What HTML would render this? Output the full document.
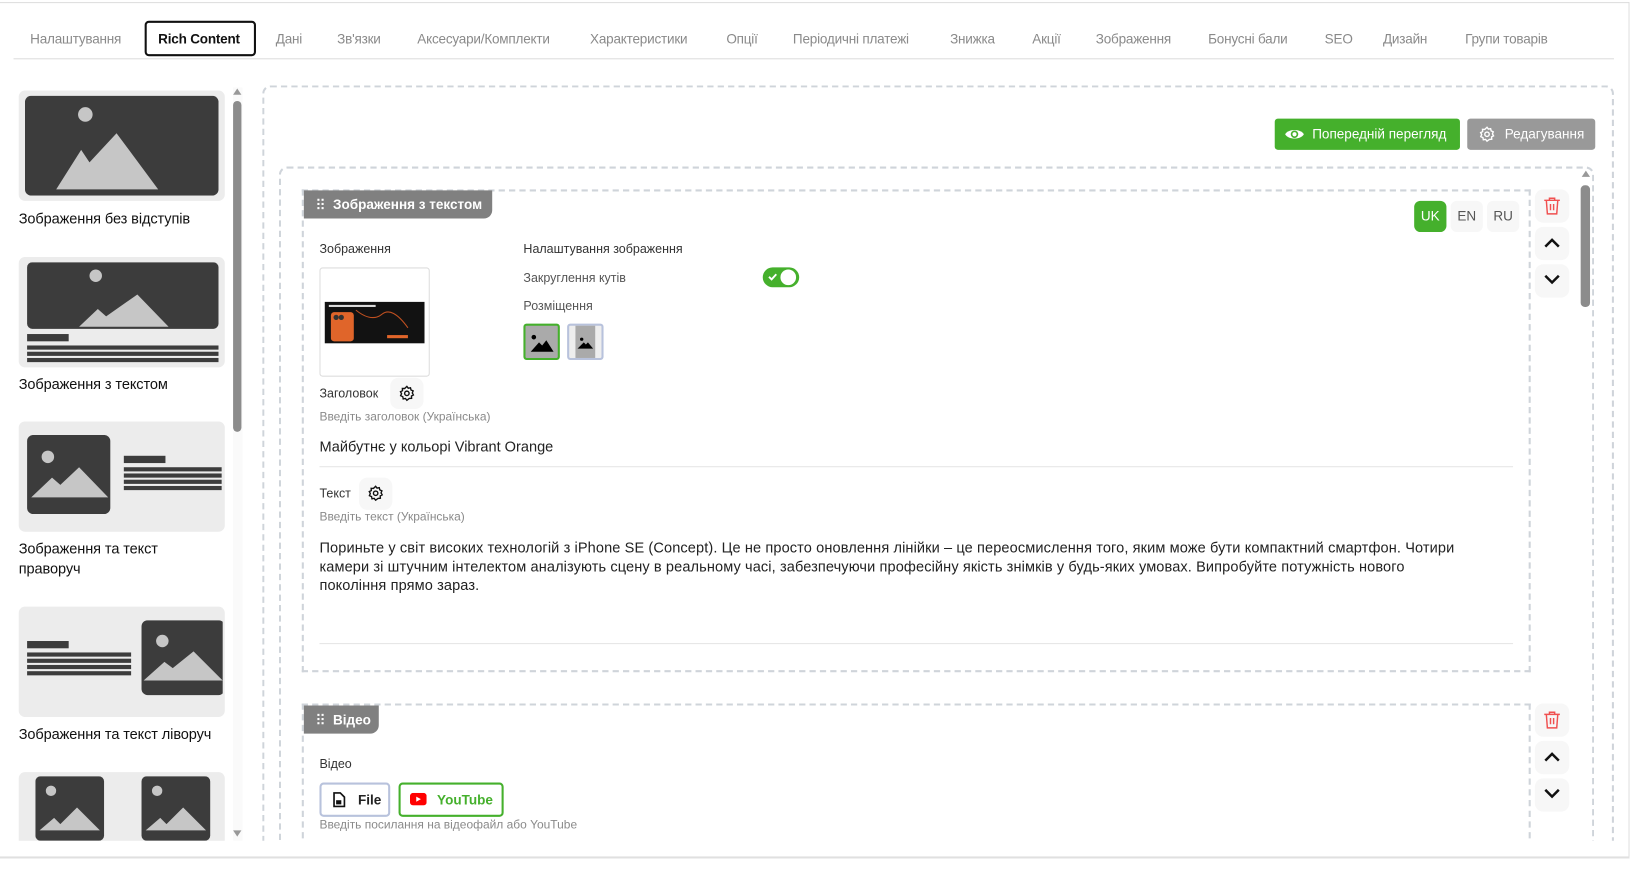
<!DOCTYPE html>
<html><head><meta charset="utf-8"><style>
*{box-sizing:border-box;margin:0;padding:0}
html,body{width:1630px;height:880px;overflow:hidden}
body{background:#fff;font-family:"Liberation Sans",sans-serif;position:relative;color:#333}
#w{position:absolute;left:0;top:0;width:1566px;height:845px;transform:scale(1.0406);transform-origin:0 0;overflow:hidden}
.a{position:absolute}
.tab{position:absolute;top:30px;font-size:13px;color:#8a8a8a;white-space:nowrap;letter-spacing:-0.2px}
.card{position:absolute;left:18px;width:198px;height:106px;background:#ececec;border-radius:6px}
.lbl{position:absolute;left:18px;font-size:14px;color:#111;letter-spacing:-0.1px;line-height:19px}
.dash{position:absolute;border:2px dashed #cfd4da}
.sq{position:absolute;width:33px;height:32px;background:#f7f7f7;border-radius:8px}
.small{font-size:12px;color:#8a8a8a}
</style></head><body><div id="w">
<div class="a" style="left:0;top:2px;width:1566px;height:1px;background:#ddd"></div>
<div class="a" style="left:1565px;top:2px;width:1px;height:822px;background:#ddd"></div>
<div class="a" style="left:0;top:823px;width:1566px;height:2px;background:#e0e0e0"></div>

<div class="a" style="left:13px;top:56px;width:1538px;height:1px;background:#ddd"></div>
<div class="a" style="left:139px;top:20px;width:107px;height:34px;border:2px solid #111;border-radius:4px;background:#fff"></div>
<div class="tab" style="left:29px">Налаштування</div>
<div class="tab" style="left:152px;color:#111;font-weight:bold">Rich Content</div>
<div class="tab" style="left:265px">Дані</div>
<div class="tab" style="left:324px">Зв'язки</div>
<div class="tab" style="left:401px">Аксесуари/Комплекти</div>
<div class="tab" style="left:567px">Характеристики</div>
<div class="tab" style="left:698px">Опції</div>
<div class="tab" style="left:762px">Періодичні платежі</div>
<div class="tab" style="left:913px">Знижка</div>
<div class="tab" style="left:992px">Акції</div>
<div class="tab" style="left:1053px">Зображення</div>
<div class="tab" style="left:1161px">Бонусні бали</div>
<div class="tab" style="left:1273px">SEO</div>
<div class="tab" style="left:1329px">Дизайн</div>
<div class="tab" style="left:1408px">Групи товарів</div>

<!-- sidebar -->
<div class="a" style="left:0;top:80px;width:240px;height:728px;overflow:hidden">
<div class="card" style="top:7px"><svg class="a" style="left:6px;top:5px" width="186" height="96"><rect width="186" height="96" rx="6" fill="#3c3c3c"/><circle cx="58" cy="18" r="7" fill="#c6c6c6"/><path d="M30 90 L54 52 L62 64 L88 36 L128 90Z" fill="#c6c6c6"/></svg></div>
<div class="lbl" style="top:121px">Зображення без відступів</div>
<div class="card" style="top:167px"><svg class="a" style="left:8px;top:5px" width="184" height="100"><rect width="184" height="64" rx="5" fill="#3c3c3c"/><circle cx="66" cy="13" r="6" fill="#c6c6c6"/><path d="M50 62 L68 45 L76 52 L106 31 L136 62Z" fill="#c6c6c6"/><rect y="69" width="40" height="7" fill="#3c3c3c"/><rect y="80" width="184" height="4" fill="#3c3c3c"/><rect y="86" width="184" height="4" fill="#3c3c3c"/><rect y="92" width="184" height="4" fill="#3c3c3c"/></svg></div>
<div class="lbl" style="top:280px">Зображення з текстом</div>
<div class="card" style="top:325px"><svg class="a" style="left:8px;top:13px" width="188" height="80"><rect width="80" height="76" rx="6" fill="#3c3c3c"/><circle cx="20" cy="21" r="6" fill="#c6c6c6"/><path d="M4 60 L24 41 L32 48 L50 31 L78 60Z" fill="#c6c6c6"/><rect x="93" y="20" width="40" height="7" fill="#3c3c3c"/><rect x="93" y="31" width="94" height="4" fill="#3c3c3c"/><rect x="93" y="37" width="94" height="4" fill="#3c3c3c"/><rect x="93" y="43" width="94" height="4" fill="#3c3c3c"/><rect x="93" y="49" width="94" height="4" fill="#3c3c3c"/></svg></div>
<div class="lbl" style="top:438px">Зображення та текст<br>праворуч</div>
<div class="card" style="top:503px"><svg class="a" style="left:8px;top:13px" width="188" height="80"><rect x="0" y="20" width="40" height="7" fill="#3c3c3c"/><rect y="31" width="100" height="4" fill="#3c3c3c"/><rect y="37" width="100" height="4" fill="#3c3c3c"/><rect y="43" width="100" height="4" fill="#3c3c3c"/><rect y="49" width="100" height="4" fill="#3c3c3c"/><rect x="110" width="80" height="72" rx="6" fill="#3c3c3c"/><circle cx="130" cy="20" r="6" fill="#c6c6c6"/><path d="M112 58 L132 40 L140 46 L160 30 L188 58Z" fill="#c6c6c6"/></svg></div>
<div class="lbl" style="top:616px">Зображення та текст ліворуч</div>
<div class="card" style="top:662px"><svg class="a" style="left:16px;top:4px" width="170" height="70"><rect width="66" height="62" rx="5" fill="#3c3c3c"/><circle cx="15" cy="14" r="5" fill="#c6c6c6"/><path d="M4 52 L18 40 L24 46 L40 30 L62 52Z" fill="#c6c6c6"/><rect x="102" width="66" height="62" rx="5" fill="#3c3c3c"/><circle cx="117" cy="14" r="5" fill="#c6c6c6"/><path d="M106 52 L120 40 L126 46 L142 30 L164 52Z" fill="#c6c6c6"/></svg></div>
</div>
<div class="a" style="left:224px;top:84px;width:9px;height:724px;background:#fafafa"></div>
<div class="a" style="left:224px;top:85px;width:0;height:0;border-left:4.5px solid transparent;border-right:4.5px solid transparent;border-bottom:6px solid #999"></div>
<div class="a" style="left:224px;top:97px;width:8px;height:318px;background:#8c8c8c;border-radius:4px"></div>
<div class="a" style="left:224px;top:798px;width:0;height:0;border-left:4.5px solid transparent;border-right:4.5px solid transparent;border-top:6px solid #999"></div>

<!-- main -->
<div class="a" style="left:252px;top:82px;width:1299px;height:726px;overflow:hidden">
 <div class="dash" style="left:0;top:0;width:1299px;height:740px;border-radius:8px"></div>
 <div class="a" style="left:973px;top:32px;width:178px;height:30px;background:#45b02c;border-radius:3px;color:#fff;font-size:13px;line-height:30px;padding-left:36px">Попередній перегляд
  <svg class="a" style="left:9px;top:8px" width="20" height="14" viewBox="0 0 20 14"><path d="M1 7C4 1.5 16 1.5 19 7C16 12.5 4 12.5 1 7Z" fill="#fff"/><circle cx="10" cy="7" r="3.6" fill="#45b02c"/><circle cx="10" cy="7" r="2" fill="#fff"/></svg></div>
 <div class="a" style="left:1158px;top:32px;width:123px;height:30px;background:#999;border-radius:3px;color:#fff;font-size:13px;line-height:30px;padding-left:36px">Редагування
  <svg class="a" style="left:11px;top:7px" width="16" height="16" viewBox="0 0 24 24" fill="none" stroke="#fff" stroke-width="2"><circle cx="12" cy="12" r="3.2"/><path d="M12 2l2 2.6 3.2-.6.8 3.2 3 1.3-1.2 3 1.6 2.8-2.8 1.6.2 3.3-3.3.2L12 22l-2.1-2.6-3.2.6-.6-3.2L3 15.4l1.3-3L2.8 9.6l2.9-1.4-.2-3.3 3.3.1z"/></svg></div>
 <div class="dash" style="left:16px;top:78px;width:1264px;height:660px;border-radius:8px"></div>
 <div class="a" style="left:1268px;top:82px;width:0;height:0;border-left:4.5px solid transparent;border-right:4.5px solid transparent;border-bottom:6px solid #999"></div>
 <div class="a" style="left:1267px;top:96px;width:9px;height:117px;background:#8c8c8c;border-radius:4px"></div>

 <!-- block 1 -->
 <div class="dash" style="left:38px;top:100px;width:1181px;height:464px"></div>
 <div class="a" style="left:40px;top:101px;width:181px;height:27px;background:#808080;border-radius:0 0 8px 0;color:#fff;font-size:13px;font-weight:bold;line-height:27px;padding-left:28px">Зображення з текстом</div>
 <div class="a" style="left:53px;top:109px;width:2px;height:2px;background:#fff;box-shadow:4px 0 #fff,0 4px #fff,4px 4px #fff,0 8px #fff,4px 8px #fff"></div>
 <div class="a" style="left:1107px;top:111px;width:31px;height:30px;background:#45b02c;border-radius:6px;color:#fff;font-size:13px;line-height:30px;text-align:center">UK</div>
 <div class="a" style="left:1142px;top:111px;width:31px;height:30px;background:#f7f7f7;border-radius:6px;color:#555;font-size:13px;line-height:30px;text-align:center">EN</div>
 <div class="a" style="left:1177px;top:111px;width:31px;height:30px;background:#f7f7f7;border-radius:6px;color:#555;font-size:13px;line-height:30px;text-align:center">RU</div>

 <div class="a" style="left:55px;top:150px;font-size:12px;color:#333">Зображення</div>
 <div class="a" style="left:55px;top:175px;width:106px;height:105px;border:1px solid #ddd;border-radius:3px;background:#fff"></div>
 <svg class="a" style="left:60px;top:208px" width="96" height="40"><rect width="96" height="40" fill="#121212"/><rect x="6" y="10" width="22" height="28" rx="3" fill="#e0652a"/><circle cx="11" cy="15" r="2.5" fill="#333"/><circle cx="16" cy="15" r="2.5" fill="#333"/><path d="M30 8 Q45 20 55 12 T80 25" stroke="#c05020" fill="none"/><rect x="60" y="32" width="20" height="3" fill="#e0652a"/><rect x="4" y="3" width="45" height="2" fill="#ddd"/></svg>
 <div class="a" style="left:55px;top:289px;font-size:12px;color:#333">Заголовок</div>
 <div class="sq" style="left:123px;top:281px;width:32px;height:30px"></div>
 <svg class="a" style="left:131px;top:288px" width="16" height="16" viewBox="0 0 24 24" fill="none" stroke="#111" stroke-width="2"><circle cx="12" cy="12" r="3.2"/><path d="M12 2l2 2.6 3.2-.6.8 3.2 3 1.3-1.2 3 1.6 2.8-2.8 1.6.2 3.3-3.3.2L12 22l-2.1-2.6-3.2.6-.6-3.2L3 15.4l1.3-3L2.8 9.6l2.9-1.4-.2-3.3 3.3.1z"/></svg>
 <div class="a small" style="left:55px;top:313px;font-size:11.5px">Введіть заголовок (Українська)</div>
 <div class="a" style="left:55px;top:339px;font-size:14px;color:#222">Майбутнє у кольорі Vibrant Orange</div>
 <div class="a" style="left:55px;top:366px;width:1147px;height:1px;background:#e5e5e5"></div>
 <div class="a" style="left:55px;top:385px;font-size:12px;color:#333">Текст</div>
 <div class="sq" style="left:93px;top:377px;width:32px;height:31px"></div>
 <svg class="a" style="left:101px;top:384px" width="16" height="16" viewBox="0 0 24 24" fill="none" stroke="#111" stroke-width="2"><circle cx="12" cy="12" r="3.2"/><path d="M12 2l2 2.6 3.2-.6.8 3.2 3 1.3-1.2 3 1.6 2.8-2.8 1.6.2 3.3-3.3.2L12 22l-2.1-2.6-3.2.6-.6-3.2L3 15.4l1.3-3L2.8 9.6l2.9-1.4-.2-3.3 3.3.1z"/></svg>
 <div class="a small" style="left:55px;top:409px;font-size:11.5px">Введіть текст (Українська)</div>
 <div class="a" style="left:55px;top:435px;width:1100px;font-size:14px;line-height:18px;color:#222;letter-spacing:0.1px">Пориньте у світ високих технологій з iPhone SE (Concept). Це не просто оновлення лінійки – це переосмислення того, яким може бути компактний смартфон. Чотири камери зі штучним інтелектом аналізують сцену в реальному часі, забезпечуючи професійну якість знімків у будь-яких умовах. Випробуйте потужність нового покоління прямо зараз.</div>
 <div class="a" style="left:55px;top:536px;width:1147px;height:1px;background:#e5e5e5"></div>

 <div class="a" style="left:251px;top:150px;font-size:12px;color:#333">Налаштування зображення</div>
 <div class="a" style="left:251px;top:178px;font-size:12px;color:#555">Закруглення кутів</div>
 <div class="a" style="left:481px;top:175px;width:35px;height:19px;background:#45b02c;border-radius:10px"></div>
 <div class="a" style="left:498px;top:177px;width:15px;height:15px;background:#fff;border-radius:50%"></div>
 <svg class="a" style="left:486px;top:180px" width="9" height="8"><path d="M1 4l2.5 2.5L8 1.5" stroke="#fff" stroke-width="1.8" fill="none"/></svg>
 <div class="a" style="left:251px;top:205px;font-size:12px;color:#555">Розміщення</div>
 <div class="a" style="left:251px;top:229px;width:35px;height:35px;border:2px solid #45b02c;border-radius:3px;background:#aaa"></div>
 <svg class="a" style="left:256px;top:234px" width="26" height="26"><circle cx="5" cy="8" r="2.2"/><path d="M2 22L10 13L13 16L17 11L24 22Z"/></svg>
 <div class="a" style="left:293px;top:229px;width:35px;height:35px;border:2px solid #b8c2dc;border-radius:3px;background:#eee"></div>
 <div class="a" style="left:301px;top:231px;width:19px;height:31px;background:#aaa"></div>
 <svg class="a" style="left:302px;top:240px" width="17" height="14"><circle cx="5" cy="4" r="1.6"/><path d="M1 13L7 7L9 9L11 7L16 13Z"/></svg>

 <div class="sq" style="left:1223px;top:100px"></div>
 <svg class="a" style="left:1231px;top:107px" width="17" height="18" viewBox="0 0 17 18" fill="none" stroke="#f05050" stroke-width="1.4"><path d="M1 3.5h15M6 3.5V1.5h5v2M3 3.5l1 13h9l1-13M7 7v6M10 7v6"/></svg>
 <div class="sq" style="left:1223px;top:136px"></div>
 <svg class="a" style="left:1231px;top:145px" width="17" height="12"><path d="M2 10L8.5 3.5L15 10" stroke="#111" stroke-width="2.4" fill="none"/></svg>
 <div class="sq" style="left:1223px;top:172px"></div>
 <svg class="a" style="left:1231px;top:180px" width="17" height="12"><path d="M2 3L8.5 9.5L15 3" stroke="#111" stroke-width="2.4" fill="none"/></svg>

 <!-- block 2 -->
 <div class="dash" style="left:38px;top:594px;width:1181px;height:140px"></div>
 <div class="a" style="left:40px;top:596px;width:72px;height:27px;background:#808080;border-radius:0 0 8px 0;color:#fff;font-size:13px;font-weight:bold;line-height:27px;padding-left:28px">Відео</div>
 <div class="a" style="left:53px;top:604px;width:2px;height:2px;background:#fff;box-shadow:4px 0 #fff,0 4px #fff,4px 4px #fff,0 8px #fff,4px 8px #fff"></div>
 <div class="a" style="left:55px;top:645px;font-size:12px;color:#333">Відео</div>
 <div class="a" style="left:55px;top:670px;width:68px;height:33px;border:2px solid #b8c2dc;border-radius:4px;font-size:13px;font-weight:bold;line-height:29px;padding-left:35px;color:#222">File</div>
 <svg class="a" style="left:68px;top:679px" width="12" height="15"><path d="M1 1h6l4 4v9H1z" fill="none" stroke="#111" stroke-width="1.6"/><rect x="3" y="8" width="5" height="4" fill="#111"/></svg>
 <div class="a" style="left:131px;top:670px;width:101px;height:33px;border:2px solid #45b02c;border-radius:4px;font-size:13px;font-weight:bold;line-height:29px;padding-left:35px;color:#45b02c">YouTube</div>
 <svg class="a" style="left:142px;top:680px" width="16" height="12"><rect width="16" height="12" rx="3" fill="#f00"/><path d="M6 3.5v5l4.5-2.5z" fill="#fff"/></svg>
 <div class="a small" style="left:55px;top:705px;font-size:11.5px">Введіть посилання на відеофайл або YouTube</div>
 <div class="sq" style="left:1223px;top:594px"></div>
 <svg class="a" style="left:1231px;top:601px" width="17" height="18" viewBox="0 0 17 18" fill="none" stroke="#f05050" stroke-width="1.4"><path d="M1 3.5h15M6 3.5V1.5h5v2M3 3.5l1 13h9l1-13M7 7v6M10 7v6"/></svg>
 <div class="sq" style="left:1223px;top:630px"></div>
 <svg class="a" style="left:1231px;top:639px" width="17" height="12"><path d="M2 10L8.5 3.5L15 10" stroke="#111" stroke-width="2.4" fill="none"/></svg>
 <div class="sq" style="left:1223px;top:666px"></div>
 <svg class="a" style="left:1231px;top:674px" width="17" height="12"><path d="M2 3L8.5 9.5L15 3" stroke="#111" stroke-width="2.4" fill="none"/></svg>
</div>
</div></body></html>
